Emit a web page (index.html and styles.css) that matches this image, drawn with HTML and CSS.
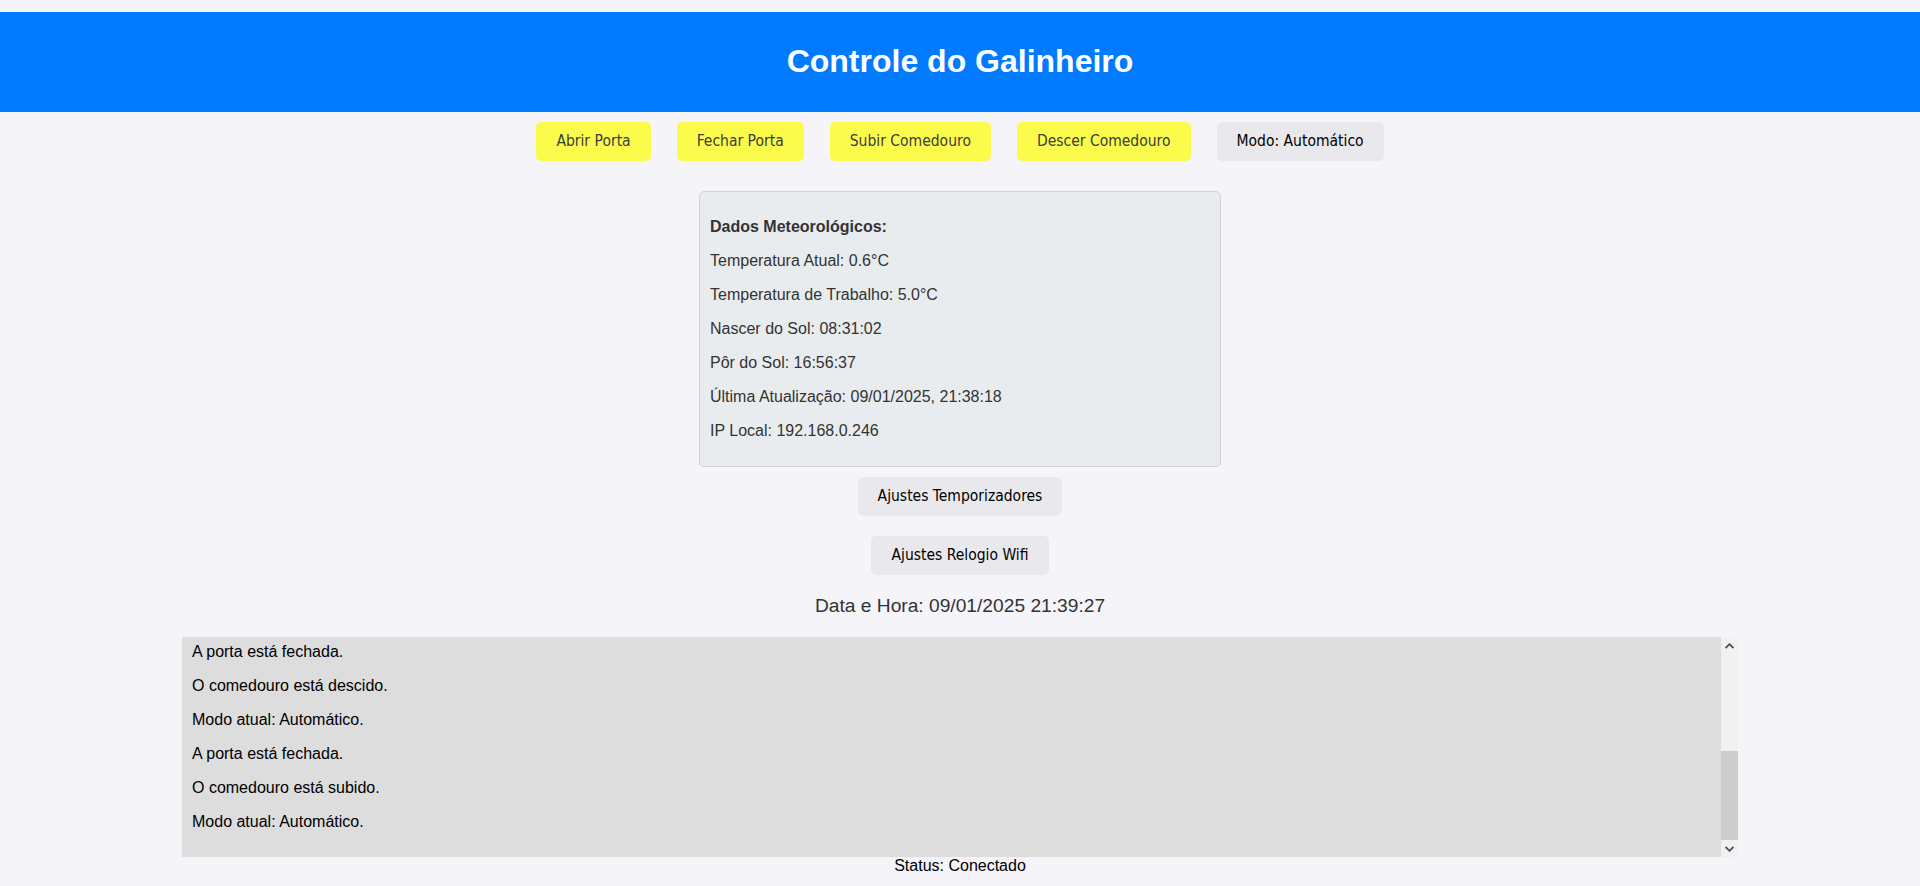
FILE: index.html
```html
<!DOCTYPE html>
<html lang="pt-BR">
<head>
<meta charset="utf-8">
<title>Controle do Galinheiro</title>
<link rel="stylesheet" href="styles.css">
</head>
<body>
<header class="header">
  <h1 class="title">Controle do Galinheiro</h1>
</header>
<div class="controls">
  <button class="btn btn-yellow">Abrir Porta</button>
  <button class="btn btn-yellow">Fechar Porta</button>
  <button class="btn btn-yellow">Subir Comedouro</button>
  <button class="btn btn-yellow">Descer Comedouro</button>
  <button class="btn btn-grey">Modo: Automático</button>
</div>
<div class="weather">
  <p class="weather-title">Dados Meteorológicos:</p>
  <p>Temperatura Atual: 0.6°C</p>
  <p>Temperatura de Trabalho: 5.0°C</p>
  <p>Nascer do Sol: 08:31:02</p>
  <p>Pôr do Sol: 16:56:37</p>
  <p>Última Atualização: 09/01/2025, 21:38:18</p>
  <p>IP Local: 192.168.0.246</p>
</div>
<div class="settings">
  <button class="btn btn-grey">Ajustes Temporizadores</button>
  <button class="btn btn-grey">Ajustes Relogio Wifi</button>
</div>
<div class="datetime">Data e Hora: 09/01/2025 21:39:27</div>
<div class="log-frame">
  <div class="log">
    <p>A porta está fechada.</p>
    <p>O comedouro está descido.</p>
    <p>Modo atual: Automático.</p>
    <p>A porta está fechada.</p>
    <p>O comedouro está subido.</p>
    <p>Modo atual: Automático.</p>
  </div>
  <div class="scrollbar" aria-hidden="true">
    <div class="sb-btn">
      <svg width="9" height="6" viewBox="0 0 9 6"><path d="M0.6 5 L4.5 1.2 L8.4 5" fill="none" stroke="#505050" stroke-width="1.8"/></svg>
    </div>
    <div class="sb-track"><div class="sb-thumb"></div></div>
    <div class="sb-btn">
      <svg width="9" height="6" viewBox="0 0 9 6"><path d="M0.6 1 L4.5 4.8 L8.4 1" fill="none" stroke="#505050" stroke-width="1.8"/></svg>
    </div>
  </div>
</div>
<div class="status">Status: Conectado</div>
</body>
</html>
```
FILE: styles.css
```css
html, body {
  margin: 0;
}
body {
  padding-top: 12px;
  background: #f4f4f9;
  font-family: "Liberation Sans", Arial, sans-serif;
  font-size: 16px;
  color: #000;
}
.header {
  background: #007bff;
  color: #fff;
  text-align: center;
  padding: 10px;
}
.title {
  margin: 21px 0 22px;
  font-size: 32px;
  font-weight: bold;
  line-height: 37px;
}
.controls {
  display: flex;
  justify-content: center;
  gap: 26px;
  padding: 10px 0;
}
.btn {
  border: none;
  border-radius: 5px;
  padding: 10px 20px;
  font-family: "DejaVu Sans Condensed", "DejaVu Sans", sans-serif;
  font-size: 15.5px;
  line-height: 19px;
  cursor: pointer;
}
.btn-yellow {
  background: #fbfb4b;
  color: #3c3c3c;
}
.btn-grey {
  background: #e9e9ed;
  color: #000;
}
.weather {
  width: 500px;
  margin: 20px auto 0;
  padding: 10px;
  background: #e9ecef;
  border: 1px solid #d2d2d2;
  border-radius: 5px;
  color: #333;
}
.weather p {
  margin: 16px 0;
  line-height: 18px;
}
.weather-title {
  font-weight: bold;
}
.settings {
  display: flex;
  flex-direction: column;
  align-items: center;
  gap: 20px;
  margin-top: 10px;
}
.datetime {
  margin: 20px 0;
  text-align: center;
  font-size: 19.2px;
  line-height: 22px;
  color: #333;
}
.log-frame {
  position: relative;
  width: calc(80% + 20px);
  margin: 0 auto;
}
.log {
  box-sizing: border-box;
  height: 220px;
  padding: 6px 27px 10px 10px;
  background: #ddd;
  overflow: hidden;
}
.log p {
  margin: 16px 0;
  line-height: 18px;
}
.log p:first-child {
  margin-top: 0;
}
.scrollbar {
  position: absolute;
  top: 0;
  right: 0;
  bottom: 0;
  width: 17px;
  display: flex;
  flex-direction: column;
  background: #f1f1f1;
}
.sb-btn {
  height: 17px;
  display: flex;
  align-items: center;
  justify-content: center;
}
.sb-track {
  flex: 1;
  display: flex;
  flex-direction: column;
  justify-content: flex-end;
}
.sb-thumb {
  height: 89px;
  background: #cdcdcd;
}
.status {
  text-align: center;
  line-height: 18px;
}
```
